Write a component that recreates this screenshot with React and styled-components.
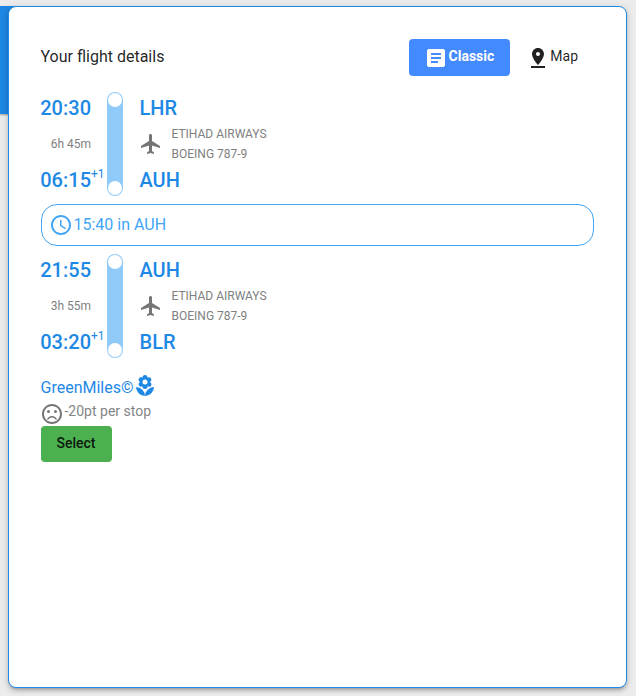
import React from "react";
import styled, { createGlobalStyle } from "styled-components";
import {
  MdFlight,
  MdAccessTime,
  MdArticle,
  MdPinDrop,
  MdLocalFlorist,
  MdOutlineSentimentDissatisfied,
} from "react-icons/md";

const GlobalStyle = createGlobalStyle`
  * { box-sizing: border-box; }
  body {
    margin: 0;
    background: #ececec;
    font-family: Roboto, sans-serif;
    color: rgba(0, 0, 0, 0.87);
    overflow: hidden;
  }
  svg { display: block; flex: none; }
`;

const Page = styled.div`
  display: flex;
  align-items: flex-start;
  height: 696px;
  padding-top: 6px;
`;

const HeaderStrip = styled.div`
  width: 20px;
  height: 108px;
  margin-right: -12px;
  background: #1e88e5;
  box-shadow: 0 1px 2px rgba(0, 0, 0, 0.35);
`;

const Card = styled.main`
  position: relative;
  width: 619px;
  height: 682px;
  padding: 32px 32px 0 31.5px;
  border: 1px solid #1e88e5;
  border-radius: 8px;
  background: #fff;
  box-shadow: 0 3px 3px -2px rgba(0, 0, 0, 0.2), 0 3px 4px rgba(0, 0, 0, 0.14),
    0 1px 8px rgba(0, 0, 0, 0.12);
`;

const TopBar = styled.header`
  display: flex;
  align-items: center;
  justify-content: space-between;
  height: 37px;
  margin-bottom: 16px;
`;

const Title = styled.h1`
  margin: 0;
  padding-bottom: 2px;
  font-size: 16px;
  line-height: 24px;
  font-weight: 400;
`;

const Tabs = styled.nav`
  display: flex;
`;

const Tab = styled.button`
  display: flex;
  align-items: center;
  height: 37px;
  padding: 0 16px;
  border: 0;
  border-radius: 4px;
  background: ${(p) => (p.$active ? "#448aff" : "transparent")};
  color: ${(p) => (p.$active ? "#fff" : "rgba(0, 0, 0, 0.87)")};
  font: ${(p) => (p.$active ? 700 : 400)} 14px/20px Roboto, sans-serif;
  svg { margin: 0 0.5px 0 -0.5px; }
  span { padding-bottom: 3px; }
`;

const Segment = styled.section`
  display: grid;
  grid-template-columns: 50.5px 16px 1fr;
  column-gap: 16px;
  height: 104px;
`;

const Column = styled.div`
  display: flex;
  flex-direction: column;
  justify-content: space-between;
  align-items: ${(p) => p.$align};
  height: 104px;
`;

const Major = styled.div`
  display: flex;
  height: 32px;
  padding-left: 0.5px;
  font-size: 20px;
  line-height: 33px;
  font-weight: 500;
  white-space: nowrap;
  color: #1e88e5;
`;

const DayOffset = styled.sup`
  width: 0;
  font-size: 12px;
  line-height: 20px;
  font-weight: 400;
`;

const Duration = styled.div`
  font-size: 12px;
  line-height: 20px;
  color: #808080;
  white-space: nowrap;
`;

const Track = styled.div`
  display: flex;
  flex-direction: column;
  align-items: center;
  justify-content: space-between;
  padding: 1px;
  border-radius: 8px;
  background: #90caf9;
`;

const Stop = styled.i`
  width: 14px;
  height: 14px;
  border-radius: 50%;
  background: #fff;
`;

const Flight = styled.div`
  display: flex;
  align-items: center;
  gap: 8px;
  color: #757575;
`;

const Carrier = styled.div`
  padding-left: 0.5px;
  font-size: 12px;
  line-height: 20px;
  color: #808080;
  text-transform: uppercase;
`;

const Layover = styled.div`
  display: flex;
  align-items: center;
  height: 42px;
  margin: 8px 0;
  padding: 0 0 0 8px;
  border: 1px solid #42a5f5;
  border-radius: 16px;
  color: #42a5f5;
  font-size: 16px;
  line-height: 24px;
  svg { margin: 0 0.5px 0 -0.5px; }
  span { padding-bottom: 1px; }
`;

const Miles = styled.div`
  display: flex;
  align-items: center;
  height: 24px;
  margin-top: 16px;
  font-size: 16px;
  color: #1e88e5;
  svg { margin: -1px 0 0 -0.5px; }
  span { padding-top: 2px; }
`;

const Penalty = styled.div`
  display: flex;
  align-items: center;
  height: 28px;
  font-size: 14px;
  color: #858585;
  svg { margin: 4px 0.5px 0 -0.5px; color: #757575; }
  span { padding-bottom: 2px; }
`;

const SelectButton = styled.button`
  width: 71px;
  height: 36px;
  padding: 0 0 2px;
  border: 0;
  border-radius: 4px;
  background: #4caf50;
  color: rgba(0, 0, 0, 0.87);
  font: 500 14px/20px Roboto, sans-serif;
`;

const segments = [
  { from: "LHR", to: "AUH", departs: "20:30", arrives: "06:15", duration: "6h 45m" },
  { from: "AUH", to: "BLR", departs: "21:55", arrives: "03:20", duration: "3h 55m" },
];

function FlightSegment({ from, to, departs, arrives, duration }) {
  return (
    <Segment>
      <Column $align="flex-end">
        <Major>{departs}</Major>
        <Duration>{duration}</Duration>
        <Major>{arrives}<DayOffset>+1</DayOffset></Major>
      </Column>
      <Track><Stop /><Stop /></Track>
      <Column $align="flex-start">
        <Major>{from}</Major>
        <Flight>
          <MdFlight size={24} />
          <Carrier>Etihad Airways<br />Boeing 787-9</Carrier>
        </Flight>
        <Major>{to}</Major>
      </Column>
    </Segment>
  );
}

export default function App() {
  return (
    <>
      <GlobalStyle />
      <Page>
        <HeaderStrip />
        <Card>
          <TopBar>
            <Title>Your flight details</Title>
            <Tabs>
              <Tab $active><MdArticle size={24} /><span>Classic</span></Tab>
              <Tab><MdPinDrop size={24} /><span>Map</span></Tab>
            </Tabs>
          </TopBar>
          <FlightSegment {...segments[0]} />
          <Layover><MdAccessTime size={24} /><span>15:40 in AUH</span></Layover>
          <FlightSegment {...segments[1]} />
          <Miles><span>GreenMiles©</span><MdLocalFlorist size={24} /></Miles>
          <Penalty><MdOutlineSentimentDissatisfied size={24} /><span>-20pt per stop</span></Penalty>
          <SelectButton>Select</SelectButton>
        </Card>
      </Page>
    </>
  );
}
